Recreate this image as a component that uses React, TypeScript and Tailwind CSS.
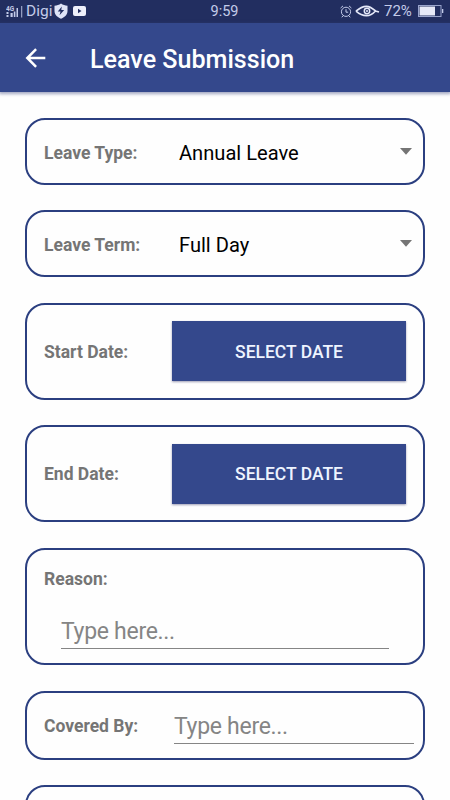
import { useState } from "react";
import type { ReactNode } from "react";

const LEAVE_TYPES = ["Annual Leave", "Medical Leave", "Emergency Leave"];
const LEAVE_TERMS = ["Full Day", "Half Day"];

export default function App() {
  const [leaveType, setLeaveType] = useState(LEAVE_TYPES[0]);
  const [leaveTerm, setLeaveTerm] = useState(LEAVE_TERMS[0]);

  return (
    <div className="w-full h-[800px] overflow-hidden bg-[#fefefe] font-['Roboto',sans-serif] flex flex-col">
      <StatusBar />
      <header className="h-[69px] shrink-0 bg-[#34488c] flex items-center pl-[25px] shadow-[0_1px_3px_1px_rgba(52,62,120,0.45)]">
        <button className="w-[21px] h-5" aria-label="Back">
          <svg viewBox="0 0 21 20" className="w-[21px] h-5" fill="none" stroke="#fff" strokeWidth="2.5">
            <path d="M20.300 10H2.500M11.100 1.200L2.300 10l8.800 8.800" />
          </svg>
        </button>
        <h1 className="ml-11 mt-[5px] text-[25.1px] leading-7 font-medium text-white whitespace-nowrap">Leave Submission</h1>
      </header>

      <main className="px-[25px] pt-[26px] flex flex-col">
        <Card className="h-[67px] items-center pt-0.5">
          <Label>Leave Type:</Label>
          <Dropdown value={leaveType} options={LEAVE_TYPES} onChange={setLeaveType} />
        </Card>
        <Card className="mt-[25px] h-[67px] items-center pt-0.5">
          <Label>Leave Term:</Label>
          <Dropdown value={leaveTerm} options={LEAVE_TERMS} onChange={setLeaveTerm} />
        </Card>
        <Card className="mt-[26px] h-[97px] items-center">
          <Label>Start Date:</Label>
          <DateButton className="mb-px" />
        </Card>
        <Card className="mt-[25px] h-[97px] items-center">
          <Label>End Date:</Label>
          <DateButton />
        </Card>
        <Card className="mt-[26px] h-[117px] flex-col">
          <div className="h-[60px] pt-[17px]">
            <Label>Reason:</Label>
          </div>
          <input
            placeholder="Type here..."
            className="ml-[17px] w-[328px] h-[39px] pt-1 text-[23px] tracking-[-0.3px] border-b border-[#858585] outline-none bg-transparent placeholder:text-[#858585] placeholder:opacity-100"
          />
        </Card>
        <Card className="mt-[26px] h-[69px] items-center">
          <Label>Covered By:</Label>
          <input
            placeholder="Type here..."
            className="ml-0.5 w-[240px] h-[36px] pt-0.5 text-[23px] tracking-[-0.3px] border-b border-[#858585] outline-none bg-transparent placeholder:text-[#858585] placeholder:opacity-100"
          />
        </Card>
        <Card className="mt-[25px] h-[67px]" />
      </main>
    </div>
  );
}

function StatusBar() {
  return (
    <div className="h-[23px] shrink-0 bg-[#222e60] text-[#c3cbe9] flex items-center justify-between pl-1.5 pr-[7px]">
      <div className="w-[103px] flex items-center">
        <svg viewBox="0 0 17 14" className="w-[17px] h-[14px]" fill="currentColor">
          <text x="0" y="5.5" fontSize="6.5" fontWeight="700">4G</text>
          <path d="M.5 7h2v2h-2zM.5 10h2v2h-2zM4.500 8h2.200v4H4.500zM7.800 6.500h1.600V12H7.800zM10.500 3h1.500v9h-1.500zM15.300 1h.9v11.500h-.9z" />
        </svg>
        <span className="ml-[3px] mt-px w-[26px] text-[15.500px] leading-none">Digi</span>
        <svg viewBox="0 0 14 16" className="ml-[2px] mb-px w-[14px] h-4 shrink-0">
          <path d="M7 .5c2 1.5 4 2 6.500 2.200V8c0 4-3.500 6.500-6.500 7.700C4 14.500.5 12 .5 8V2.700C3 2.500 5 2 7 .5z" fill="#dfe4f7" />
          <path d="M7.800 3.500L3.800 8.600h2.700L5.500 12.300l4.700-5.400H7.300z" fill="#222e60" />
        </svg>
        <svg viewBox="0 0 13 10" className="ml-[5px] mb-px w-[13px] h-[10px] shrink-0">
          <rect width="13" height="10" rx="2" fill="#eef0fb" />
          <path d="M5 2.800v4.400l3.500-2.200z" fill="#222e60" />
        </svg>
      </div>
      <span className="mt-px text-[14.500px] leading-none">9:59</span>
      <div className="w-[103px] flex items-center">
        <svg viewBox="0 0 12 13" className="w-3 h-[13px] mb-px shrink-0" fill="none" stroke="currentColor">
          <circle cx="6" cy="6.800" r="4.600" />
          <path d="M6 4.200v3h2.200M.6 3L3 .9M9 .9L11.400 3M3 10.800l-1.200 1.500M9 10.800l1.200 1.500" />
        </svg>
        <svg viewBox="0 0 25 12" className="ml-[3px] mb-px w-[25px] h-3 shrink-0" fill="none" stroke="#e4e8f8">
          <path d="M1 6.200C5 2.500 8 1.300 11.500 1.300c4 0 7 3 9 4.700l3.500 1M1 6.200c4 3.500 7 4.500 10.500 4.500 4 0 7-2.500 9-4.700" strokeWidth="1.700" />
          <circle cx="12" cy="6" r="2.700" strokeWidth="1.500" />
          <circle cx="12" cy="6" r="1" fill="#e4e8f8" stroke="none" />
        </svg>
        <span className="ml-1 text-[15px] leading-none">72%</span>
        <svg viewBox="0 0 26 12" className="ml-1.5 mb-px w-[26px] h-3 shrink-0">
          <rect x=".5" y=".5" width="22.500" height="11" fill="none" stroke="#99a4cc" />
          <rect x="1.500" y="1.500" width="15.500" height="9" fill="#e6e9f7" />
          <path d="M24 4h1.300v4H24z" fill="#c3cbe9" />
        </svg>
      </div>
    </div>
  );
}

function Card({ className, children }: { className: string; children?: ReactNode }) {
  return (
    <section className={`flex shrink-0 rounded-[20px] border-2 border-[#2b3f80] pl-[17px] ${className}`}>
      {children}
    </section>
  );
}

function Label({ children }: { children: ReactNode }) {
  return <label className="block w-[128px] shrink-0 text-[17.500px] leading-6 font-bold text-[#757575] whitespace-nowrap">{children}</label>;
}

function Dropdown({ value, options, onChange }: {
  value: string;
  options: string[];
  onChange: (value: string) => void;
}) {
  function next() {
    onChange(options[(options.indexOf(value) + 1) % options.length]);
  }

  return (
    <button onClick={next} className="flex-1 flex items-center justify-between pl-[7px] pr-[11px] text-[20.100px] leading-7 text-black">
      {value}
      <svg viewBox="0 0 12 7" className="w-3 h-[7px] mb-0.5" fill="#757575">
        <path d="M0 0h12L6 6.800z" />
      </svg>
    </button>
  );
}

function DateButton({ className = "" }: { className?: string }) {
  return (
    <button className={`w-[234px] h-[60px] pt-0.5 bg-[#34488c] text-[17.500px] font-medium text-[#eef4ff] shadow-[0_1px_2px_rgba(40,40,90,0.45)] ${className}`}>
      SELECT DATE
    </button>
  );
}
